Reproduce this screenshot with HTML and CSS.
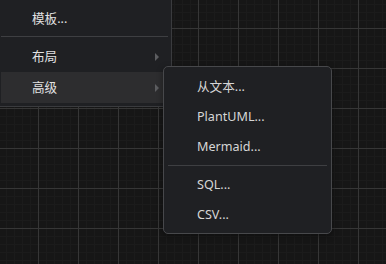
FILE: index.html
```html
<!DOCTYPE html>
<html lang="zh-CN">
<head>
  <meta charset="UTF-8" />
  <title>菜单</title>
  <link rel="stylesheet" href="styles.css">
</head>
<body>
  <div class="canvas">
    <ul class="menu main-menu">
      <li class="item">模板...</li>
      <li class="sep"></li>
      <li class="item has-sub">布局</li>
      <li class="item has-sub active">高级</li>
    </ul>

    <ul class="menu sub-menu">
      <li class="item">从文本...</li>
      <li class="item">PlantUML...</li>
      <li class="item">Mermaid...</li>
      <li class="sep"></li>
      <li class="item">SQL...</li>
      <li class="item">CSV...</li>
    </ul>
  </div>
</body>
</html>
```

FILE: styles.css
```css
* {
  box-sizing: border-box;
  margin: 0;
  padding: 0;
}

body {
  width: 386px;
  height: 264px;
  overflow: hidden;
  font-family: "Noto Sans", "Noto Sans CJK SC", sans-serif;
  font-size: 12.6px;
}

.canvas {
  position: relative;
  width: 386px;
  height: 264px;
  background:
    linear-gradient(to right, #363636 1px, transparent 1px) 38px 28px / 40px 40px,
    linear-gradient(to bottom, #363636 1px, transparent 1px) 38px 28px / 40px 40px,
    linear-gradient(to right, #1b1b1b 1px, transparent 1px) 6px 4px / 8px 8px,
    linear-gradient(to bottom, #1b1b1b 1px, transparent 1px) 6px 4px / 8px 8px,
    #161616;
}

.menu {
  list-style: none;
  position: absolute;
  background: #1f2023;
  color: #e2e2e2;
}

.item {
  height: 31px;
  line-height: 31px;
  position: relative;
  white-space: nowrap;
}

.sep {
  height: 1px;
  background: #3e3f42;
}

/* main menu, clipped at top-left */
.main-menu {
  left: -1px;
  top: -2px;
  width: 173px;
  padding: 4px 3px 3px 1px;
  border: 1px solid #3a3b3e;
}

.main-menu .item {
  padding-left: 31px;
}

.main-menu .sep {
  margin: 2px 0 4px;
}

.main-menu .active {
  background: #2d2d2f;
}

.has-sub::after {
  content: "";
  position: absolute;
  right: 9px;
  top: 12px;
  border-left: 4px solid #5c5d60;
  border-top: 4px solid transparent;
  border-bottom: 4px solid transparent;
}

.sub-menu {
  left: 163px;
  top: 66px;
  width: 169px;
  height: 168px;
  padding: 5px 4px;
  border: 1px solid #47484b;
  border-radius: 5px;
  box-shadow: 0 2px 6px rgba(0, 0, 0, 0.4);
  color: #d6d6d6;
}

.sub-menu .item {
  height: 30px;
  line-height: 30px;
  padding-left: 29px;
}

.sub-menu .sep {
  margin: 3px 0 4px;
}
```
